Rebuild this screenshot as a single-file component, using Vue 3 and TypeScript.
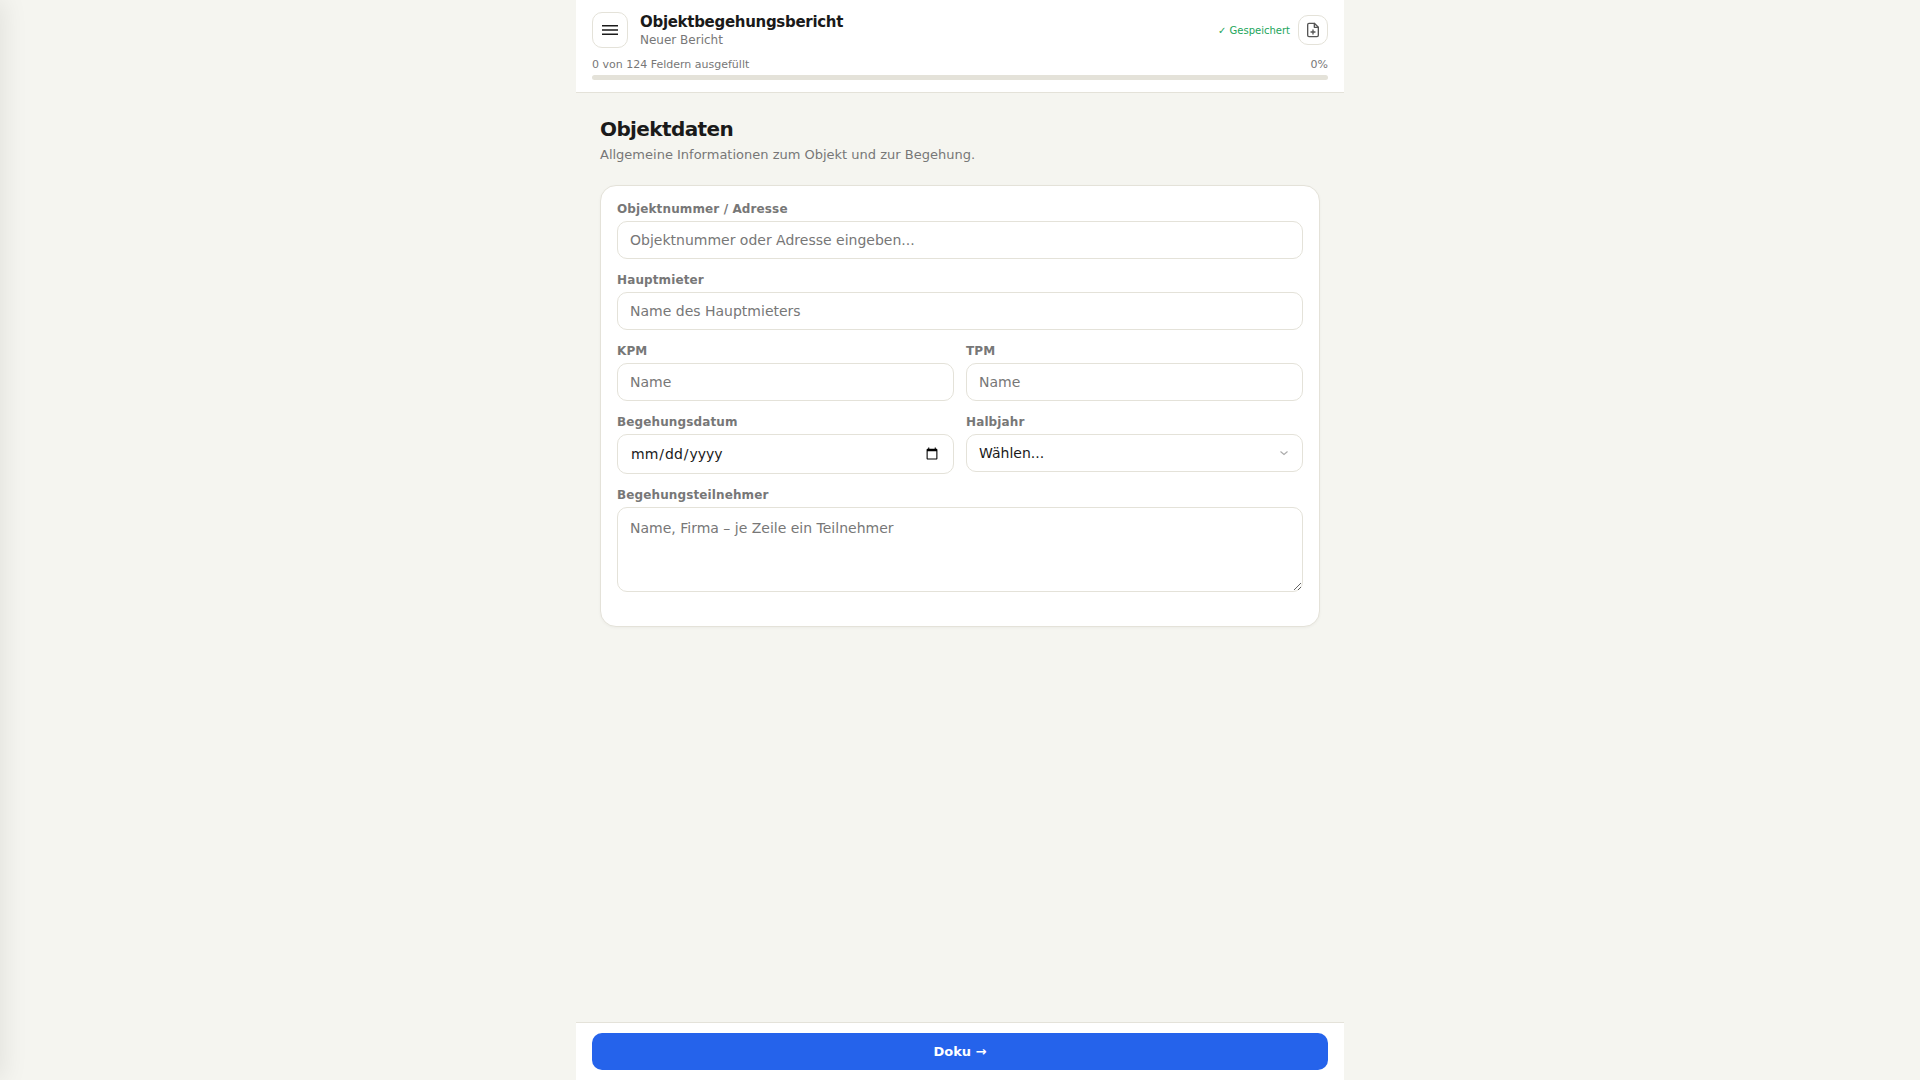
<script setup lang="ts">
const halves: string[] = ['H1', 'H2']
</script>

<template>
  <div class="page">
    <div class="drawer-shadow"></div>
    <main class="shell">
      <header class="top">
        <div class="top-row">
          <button class="icon-btn" type="button" aria-label="Menü">
            <svg width="18" height="18" viewBox="0 0 18 18" fill="none" stroke="#1a1a1a" stroke-width="1.5">
              <path d="M1 4.7h16M1 9h16M1 13.3h16" />
            </svg>
          </button>
          <div class="titles">
            <div class="title">Objektbegehungsbericht</div>
            <div class="subtitle">Neuer Bericht</div>
          </div>
          <span class="saved">✓ Gespeichert</span>
          <button class="icon-btn small" type="button" aria-label="Neu">
            <svg width="16" height="16" viewBox="0 0 24 24" fill="none" stroke="#555" stroke-width="2" stroke-linecap="round" stroke-linejoin="round">
              <path d="M14 2H6a2 2 0 0 0-2 2v16a2 2 0 0 0 2 2h12a2 2 0 0 0 2-2V8z" />
              <path d="M14 2v6h6" />
              <path d="M12 18v-6M9 15h6" />
            </svg>
          </button>
        </div>
        <div class="progress-text"><span>0 von 124 Feldern ausgefüllt</span><span>0%</span></div>
        <div class="bar"></div>
      </header>

      <section class="content">
        <h2>Objektdaten</h2>
        <p class="desc">Allgemeine Informationen zum Objekt und zur Begehung.</p>
        <div class="card">
          <div class="field">
            <label>Objektnummer / Adresse</label>
            <input type="text" placeholder="Objektnummer oder Adresse eingeben..." />
          </div>
          <div class="field">
            <label>Hauptmieter</label>
            <input type="text" placeholder="Name des Hauptmieters" />
          </div>
          <div class="cols">
            <div class="field">
              <label>KPM</label>
              <input type="text" placeholder="Name" />
            </div>
            <div class="field">
              <label>TPM</label>
              <input type="text" placeholder="Name" />
            </div>
          </div>
          <div class="cols">
            <div class="field">
              <label>Begehungsdatum</label>
              <input type="date" />
            </div>
            <div class="field">
              <label>Halbjahr</label>
              <div class="select-wrap">
                <select>
                  <option value="">Wählen...</option>
                  <option v-for="h in halves" :key="h">{{ h }}</option>
                </select>
                <svg class="chev" width="12" height="12" viewBox="0 0 12 12" fill="none" stroke="#aaa" stroke-width="1.1">
                  <path d="M2.5 4.5 6 7.5 9.5 4.5" />
                </svg>
              </div>
            </div>
          </div>
          <div class="field">
            <label>Begehungsteilnehmer</label>
            <textarea rows="3" placeholder="Name, Firma – je Zeile ein Teilnehmer"></textarea>
          </div>
        </div>
      </section>

      <footer class="bottom">
        <button class="next" type="button">Doku →</button>
      </footer>
    </main>
  </div>
</template>

<style>
html, body { margin: 0; padding: 0; background: #f5f5f0; }
</style>

<style scoped>
* { box-sizing: border-box; }
.page {
  height: 1080px;
  overflow: hidden;
  position: relative;
  background: #f5f5f0;
  font-family: "DejaVu Sans", sans-serif;
  color: #1a1a1a;
}
.drawer-shadow {
  position: absolute;
  left: -300px;
  top: 0;
  width: 300px;
  height: 100%;
  box-shadow: 4px 0 24px rgba(0, 0, 0, 0.08);
}
.shell {
  width: 768px;
  height: 1080px;
  margin: 0 auto;
  display: flex;
  flex-direction: column;
}
.top {
  background: #fff;
  border-bottom: 1px solid #e4e2d9;
  padding: 12px 16px 12px;
}
.top-row { display: flex; align-items: center; gap: 12px; height: 36px; }
.icon-btn {
  width: 36px;
  height: 36px;
  border: 1px solid #e4e2d9;
  border-radius: 10px;
  background: #fff;
  padding: 0;
  display: flex;
  align-items: center;
  justify-content: center;
  flex: none;
}
.icon-btn.small { width: 30px; height: 30px; margin-left: -4px; }
.titles { flex: 1; min-width: 0; margin-top: 2px; }
.title { font-size: 15px; font-weight: 700; line-height: 18px; letter-spacing: -0.02em; }
.subtitle { font-size: 12px; color: #777; line-height: 18px; }
.saved { font-size: 10px; color: #22a55b; }
.progress-text {
  display: flex;
  justify-content: space-between;
  font-size: 11px;
  color: #777;
  line-height: 14px;
  margin-top: 10px;
  margin-bottom: 3px;
}
.bar { height: 5px; border-radius: 3px; background: #e4e2d9; }
.content { flex: 1; padding: 24px 24px 0; }
h2 { margin: 0; font-size: 20px; line-height: 24px; font-weight: 700; color: #1a1a1a; letter-spacing: -0.03em; }
.desc { margin: 4px 0 0; font-size: 13px; line-height: 20px; color: #777; }
.card {
  margin-top: 20px;
  background: #fff;
  border: 1px solid #e4e2d9;
  border-radius: 16px;
  padding: 16px 16px 34px;
  box-shadow: 0 1px 3px rgba(0, 0, 0, 0.04);
  display: flex;
  flex-direction: column;
  gap: 14px;
}
.cols { display: grid; grid-template-columns: 1fr 1fr; gap: 12px; align-items: start; }
.field { display: flex; flex-direction: column; min-width: 0; }
label {
  font-size: 12px;
  font-weight: 700;
  color: #777;
  line-height: 14px;
  margin-bottom: 5px;
  letter-spacing: 0.01em;
}
input, select, textarea {
  width: 100%;
  font-family: "DejaVu Sans", sans-serif;
  font-size: 14px;
  color: #1a1a1a;
  background: #fff;
  border: 1px solid #e4e2d9;
  border-radius: 10px;
  padding: 10px 12px;
  outline: none;
  display: block;
}
input::placeholder, textarea::placeholder { color: #777; opacity: 1; }
input[type="text"] { height: 38px; }
input[type="date"] { height: 40px; }
.select-wrap { position: relative; }
select { height: 38px; appearance: none; -webkit-appearance: none; }
.chev { position: absolute; right: 13px; top: 13px; pointer-events: none; }
textarea { height: 85px; padding-top: 12px; resize: vertical; }
.bottom {
  background: #fff;
  border-top: 1px solid #e4e2d9;
  padding: 10px 16px;
  height: 58px;
}
.next {
  width: 100%;
  height: 37px;
  border: 0;
  border-radius: 10px;
  background: #2563eb;
  color: #fff;
  font-family: "DejaVu Sans", sans-serif;
  font-size: 13px;
  font-weight: 700;
}
</style>
